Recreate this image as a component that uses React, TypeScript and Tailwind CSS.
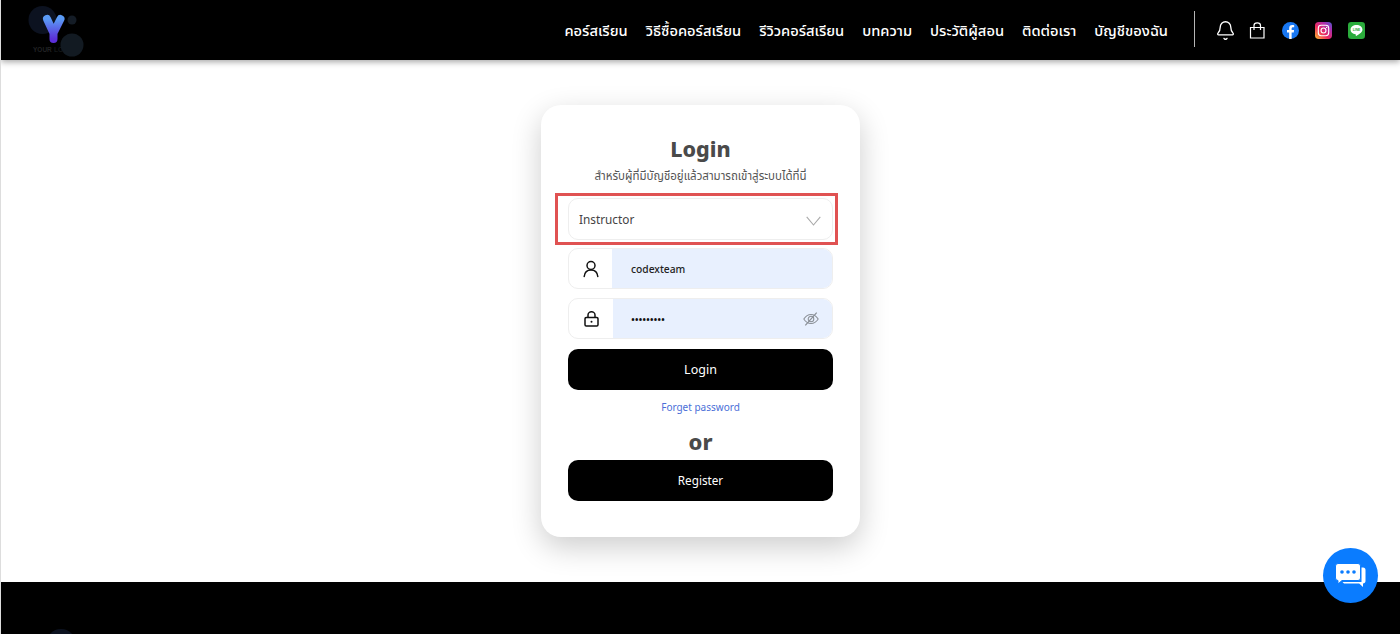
import { Bell } from "lucide-react";

const navItems = ["คอร์สเรียน", "วิธีซื้อคอร์สเรียน", "รีวิวคอร์สเรียน", "บทความ", "ประวัติผู้สอน", "ติดต่อเรา", "บัญชีของฉัน"];

function Logo() {
  return (
    <svg width="84" height="56" viewBox="0 0 84 56" className="block">
      <defs>
        <linearGradient id="logoY" x1="0" y1="0" x2="0" y2="1">
          <stop offset="0" stopColor="#5a9af5" />
          <stop offset="1" stopColor="#5b2fd8" />
        </linearGradient>
      </defs>
      <circle cx="41.500" cy="18" r="14" fill="#0c1220" />
      <circle cx="71" cy="18" r="4.500" fill="#141c26" />
      <text x="32" y="50" fontSize="6.500" fontWeight="700" fill="#202224" fontFamily="Liberation Sans, sans-serif">YOUR</text>
      <text x="53" y="50" fontSize="6.500" fontWeight="700" fill="#14181a" fontFamily="Liberation Sans, sans-serif">LO</text>
      <circle cx="71" cy="43" r="11.500" fill="#121a22" />
      <path d="M46 17 L52.500 31 M59.500 17 L52.500 31 L52.500 37" stroke="url(#logoY)" strokeWidth="8" strokeLinecap="round" strokeLinejoin="round" fill="none" />
    </svg>
  );
}

function BagIcon() {
  return (
    <svg width="17" height="17" viewBox="0 0 17 17" fill="none" stroke="#fff" strokeWidth="1.200">
      <path d="M1.500 5.500h13.500v10.500H1.500z" />
      <path d="M5 8V3.400a3.250 2.600 0 0 1 6.500 0V8" />
    </svg>
  );
}

function FacebookIcon() {
  return (
    <svg width="17" height="17" viewBox="0 0 18 18">
      <circle cx="9" cy="9" r="9" fill="#1877f2" />
      <path d="M10.200 18V11.200h2.200l.4-2.600h-2.600V7c0-.8.4-1.400 1.500-1.400h1.200V3.400c-.5-.1-1.200-.2-2-.2-2.100 0-3.300 1.200-3.300 3.400v2H5.300v2.600h2.300V18z" fill="#fff" />
    </svg>
  );
}

function InstagramIcon() {
  return (
    <svg width="17" height="17" viewBox="0 0 18 18">
      <defs>
        <linearGradient id="igFill" x1="0" y1="1" x2="1" y2="0">
          <stop offset="0" stopColor="#fdc12e" />
          <stop offset="0.4" stopColor="#ee2a5f" />
          <stop offset="0.75" stopColor="#a92fb0" />
          <stop offset="1" stopColor="#4a5bd0" />
        </linearGradient>
      </defs>
      <rect width="18" height="18" rx="4" fill="url(#igFill)" />
      <rect x="3.500" y="3.500" width="11" height="11" rx="3" fill="none" stroke="#fff" strokeWidth="1.200" />
      <circle cx="9" cy="9" r="2.600" fill="none" stroke="#fff" strokeWidth="1.200" />
      <circle cx="12.300" cy="5.700" r="0.700" fill="#fff" />
    </svg>
  );
}

function LineIcon() {
  return (
    <svg width="17" height="17" viewBox="0 0 18 18">
      <rect width="18" height="18" rx="3.500" fill="#2bac3c" />
      <path d="M9 3.200c-3.500 0-6.300 2.200-6.300 5 0 2.500 2.200 4.500 5.200 4.900.6.100.4.800.3 1.300 0 .3.200.4.500.3 1.800-.9 6.600-3.700 6.600-6.500 0-2.800-2.800-5-6.300-5z" fill="#fff" />
      <text x="9" y="9.800" textAnchor="middle" fontSize="3.600" fontWeight="700" fill="#2bac3c" fontFamily="Liberation Sans, sans-serif">LINE</text>
    </svg>
  );
}

function Header() {
  return (
    <header className="relative z-10 flex h-[60px] shrink-0 items-center justify-between bg-black pr-[35px] shadow-[0_2px_6px_rgba(0,0,0,0.35)]">
      <Logo />
      <div className="flex items-center">
        <nav className="flex items-center gap-[18px] text-[14.700px] font-medium text-white">
          {navItems.map((item) => (
            <a key={item} className="whitespace-nowrap">{item}</a>
          ))}
        </nav>
        <div className="ml-[26px] mr-[22px] mt-[-2px] h-9 w-px bg-[#b5b5b5]" />
        <div className="flex items-center gap-[16px]">
          <Bell size={21} strokeWidth={1.500} color="#fff" className="-ml-[2px] -mr-[3px]" />
          <BagIcon />
          <FacebookIcon />
          <InstagramIcon />
          <LineIcon />
        </div>
      </div>
    </header>
  );
}

function UserIcon() {
  return (
    <svg width="16" height="18" viewBox="0 0 16 18" fill="none" stroke="#111" strokeWidth="1.500" strokeLinecap="round">
      <circle cx="8" cy="5.500" r="4" />
      <path d="M1.200 16.500c.4-3.800 3-6.500 6.800-6.500s6.400 2.700 6.800 6.500" />
    </svg>
  );
}

function LockIcon() {
  return (
    <svg width="15" height="16" viewBox="0 0 15 16" fill="none" stroke="#111" strokeWidth="1.500">
      <rect x="1" y="6.500" width="13" height="8.500" rx="1.200" />
      <path d="M4 6.500V4a3.500 3.200 0 0 1 7 0V6.500" />
      <circle cx="7.500" cy="10.800" r="1" fill="#111" stroke="none" />
    </svg>
  );
}

function EyeSlashIcon() {
  return (
    <svg width="16" height="14" viewBox="0 0 18 16" fill="none" stroke="#8a8f96" strokeWidth="1.200" className="mt-[1px]">
      <path d="M.8 8C3 4.500 5.800 2.800 9 2.800S15 4.500 17.200 8C15 11.500 12.200 13.200 9 13.200S3 11.500 .8 8z" />
      <circle cx="9" cy="8" r="3.200" />
      <path d="M15.500 .8L2.500 15.200" strokeWidth="1.400" />
    </svg>
  );
}

function InputRow({ icon, iconClass, value, small, trailing }: { icon: React.ReactNode; iconClass: string; value: string; small?: boolean; trailing?: React.ReactNode }) {
  return (
    <div className="flex h-[41px] overflow-hidden rounded-[10px] border border-[#eeeeee] bg-white">
      <div className={`flex shrink-0 items-center justify-center ${iconClass}`}>{icon}</div>
      <div className="flex flex-1 items-center justify-between bg-[#e8f0fe] pl-[18px] pr-[13px]">
        <span className={small ? "mt-[4px] text-[10.500px] font-medium leading-none tracking-[-0.2px] text-[#111]" : "ml-[1px] mt-[2px] text-[10.250px] font-medium text-[#222]"}>{value}</span>
        {trailing}
      </div>
    </div>
  );
}

function LoginCard() {
  return (
    <section className="flex h-[432px] w-[319px] flex-col rounded-[20px] bg-white px-[27px] pt-[30px] shadow-[0_10px_30px_rgba(0,0,0,0.2)]">
      <h1 className="-mt-[1px] text-center text-[21.500px] font-extrabold leading-[30px] text-[#4a4a4a]">Login</h1>
      <p className="mt-[3px] text-center text-[11.500px] leading-[18px] text-[#555]">สำหรับผู้ที่มีบัญชีอยู่แล้วสามารถเข้าสู่ระบบได้ที่นี่</p>
      <div className="relative mt-[13px] flex h-[42px] items-center justify-between rounded-[10px] border border-[#eeeeee] pl-[10px] pr-[11px]">
        <span className="mt-[1px] text-[11.800px] text-[#444]">Instructor</span>
        <svg width="15" height="10" viewBox="0 0 15 10" fill="none" stroke="#a9a9a9" strokeWidth="1.100" className="mt-[3px]">
          <path d="M.7 .8L7.500 9L14.300 .8" />
        </svg>
        <div className="pointer-events-none absolute -bottom-[6px] -left-[14px] -right-[6px] -top-[6px] border-[3px] border-[#e05252]" />
      </div>
      <div className="mt-[8px] flex flex-col gap-[9px]">
        <InputRow icon={<UserIcon />} iconClass="w-[43px]" value="codexteam" />
        <InputRow icon={<LockIcon />} iconClass="w-[44px]" value="•••••••••" small trailing={<EyeSlashIcon />} />
      </div>
      <button className="mt-[10px] h-[41px] rounded-[10px] bg-black pt-[1px] text-[12.500px] text-white">Login</button>
      <a className="mt-[9px] text-center text-[10px] leading-[16px] text-[#4b6fd8]">Forget password</a>
      <div className="mt-[11px] text-center text-[22px] font-extrabold leading-[30px] text-[#4a4a4a]">or</div>
      <button className="mt-[4px] h-[41px] rounded-[10px] bg-black text-[11.700px] text-white">Register</button>
    </section>
  );
}

function ChatButton() {
  return (
    <button className="absolute bottom-[31px] right-[22px] z-20 flex h-[55px] w-[55px] items-center justify-center rounded-full bg-[#0a7cff]">
      <svg width="32" height="26" viewBox="0 0 32 26">
        <path d="M26.500 4.500h1.500a2.500 2.500 0 0 1 2.500 2.500v11c0 1.400-1 2.500-2.500 2.500v3.500l-3.800-3.500H9l-1.500-1.500h19z" fill="#fff" />
        <path d="M3 .5h20a2.500 2.500 0 0 1 2.500 2.500v12a2.500 2.500 0 0 1-2.500 2.500H7l-4 3.500v-3.500a2.500 2.500 0 0 1-2.500-2.500V3A2.500 2.500 0 0 1 3 .5z" fill="#fff" stroke="#0a7cff" strokeWidth="1" />
        <circle cx="7" cy="9" r="1.800" fill="#0a7cff" />
        <circle cx="13" cy="9" r="1.800" fill="#0a7cff" />
        <circle cx="19" cy="9" r="1.800" fill="#0a7cff" />
      </svg>
    </button>
  );
}

export default function App() {
  return (
    <div className="relative flex h-[634px] w-[1400px] flex-col overflow-hidden border-l border-[#dddddd] bg-white font-['Noto_Sans','Noto_Sans_Thai','DejaVu_Sans',sans-serif]">
      <Header />
      <main className="flex h-[522px] shrink-0 justify-center pt-[45px]">
        <LoginCard />
      </main>
      <footer className="flex-1 overflow-hidden bg-black pl-[44px] pt-[46px]">
        <svg width="32" height="16" viewBox="0 0 32 16" className="block">
          <circle cx="16" cy="16" r="15" fill="#0c1220" />
        </svg>
      </footer>
      <ChatButton />
    </div>
  );
}
